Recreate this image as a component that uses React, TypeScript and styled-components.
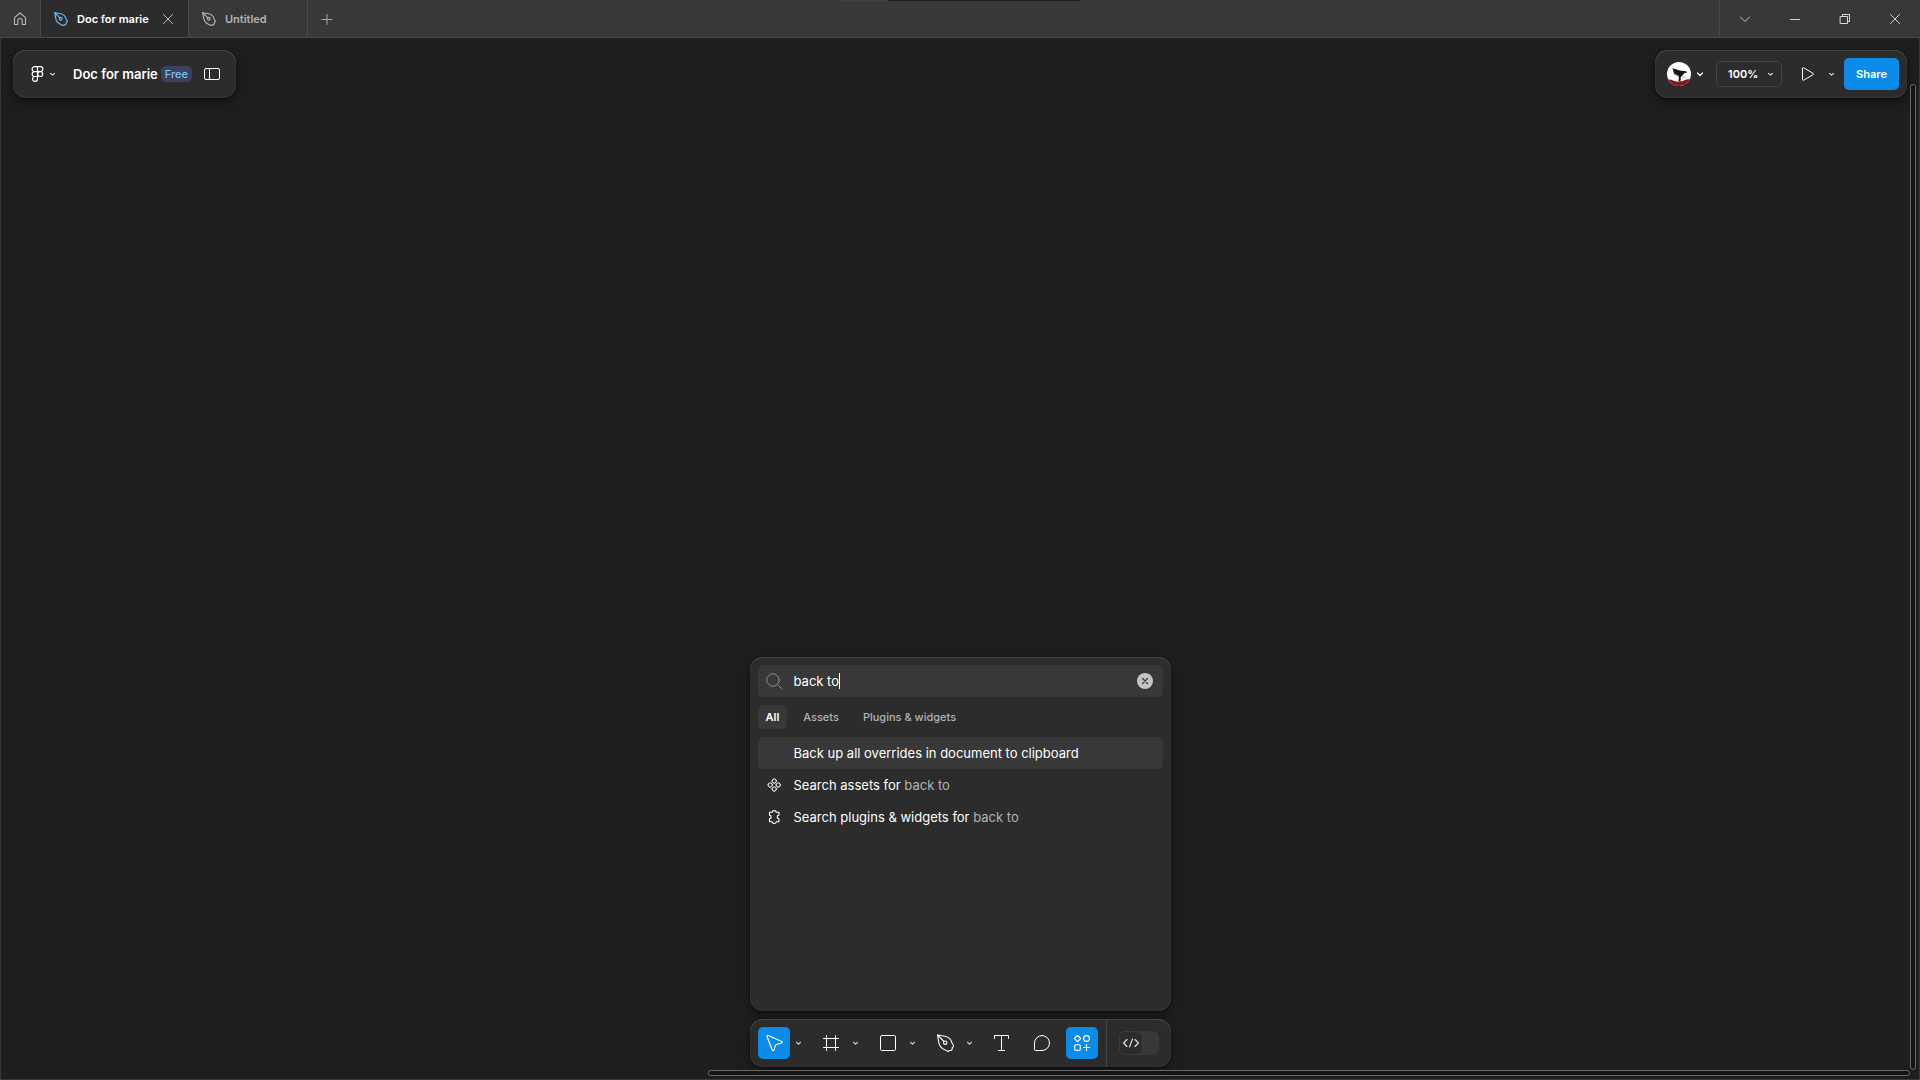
import React from "react";
import styled, { createGlobalStyle } from "styled-components";

const color = {
  bar: "#383838",
  panel: "#2c2c2c",
  canvas: "#1e1e1e",
  line: "#4a4a4a",
  blue: "#0c8ce9",
  soft: "#b3b3b3",
};

const GlobalStyle = createGlobalStyle`
  *, *::before, *::after { box-sizing: border-box; }
  body { margin: 0; background: ${color.canvas}; }
  body, button, input {
    font-family: Inter, "Liberation Sans", sans-serif;
    color: #fff;
  }
  button { border: 0; padding: 0; background: none; cursor: pointer; }
  svg { display: block; flex: none; }
`;

const Window = styled.div`
  min-height: 100vh;
  display: flex;
  flex-direction: column;
`;

/* ---------- title bar ---------- */

const TitleBar = styled.header`
  position: relative;
  height: 38px;
  display: flex;
  background: ${color.bar};
  border-bottom: 1px solid ${color.line};
`;

const TopStrip = styled.div`
  position: absolute;
  top: 0;
  left: 840px;
  width: 241px;
  height: 1px;
  background: linear-gradient(to right, #404040 48px, #1e1e1e 48px);
`;

const HomeButton = styled.button`
  width: 41px;
  display: grid;
  place-items: center;
  border-right: 1px solid ${color.line};
`;

const Tab = styled.div<{ $active?: boolean }>`
  width: ${(p) => (p.$active ? 148 : 119)}px;
  height: 37px;
  padding: 0 12px 0 13px;
  display: flex;
  align-items: center;
  background: ${(p) => (p.$active ? color.panel : "transparent")};
  border-right: 1px solid ${color.line};
`;

const TabLabel = styled.button<{ $active?: boolean }>`
  flex: 1;
  display: flex;
  align-items: center;
  gap: 9px;
  font-size: 11px;
  line-height: 16px;
  font-weight: 600;
  white-space: nowrap;
  color: ${(p) => (p.$active ? "#fff" : color.soft)};
`;

const IconButton = styled.button<{ $width?: number }>`
  width: ${(p) => p.$width ?? 16}px;
  display: grid;
  place-items: center;
`;

const WindowControls = styled.div`
  margin-left: auto;
  display: flex;
  border-left: 1px solid ${color.line};
`;

/* ---------- canvas ---------- */

const Canvas = styled.main`
  position: relative;
  flex: 1;
  display: flex;
  flex-direction: column;
  justify-content: space-between;
  padding: 12px;
  background: ${color.canvas};
  border: 1px solid #383838;
  border-top: 0;
`;

const Scrollbar = styled.div<{ $vertical?: boolean }>`
  position: absolute;
  ${(p) =>
    p.$vertical
      ? "top: 46px; bottom: 9px; right: 3px; width: 6px;"
      : "left: 707px; right: 9px; bottom: 3px; height: 6px;"}
  background: #141414;
  border: 1px solid #686868;
  border-radius: 3px;
`;

const TopRow = styled.div`
  display: flex;
  justify-content: space-between;
`;

const Panel = styled.section`
  background: ${color.panel};
  border-radius: 13px;
  box-shadow:
    inset 0 1px 0 rgba(255, 255, 255, 0.1),
    inset 0 0 1px rgba(255, 255, 255, 0.3),
    0 1px 3px rgba(0, 0, 0, 0.5),
    0 5px 12px rgba(0, 0, 0, 0.3);
`;

const FilePanel = styled(Panel)`
  height: 48px;
  padding: 0 16px 0 18px;
  display: flex;
  align-items: center;
`;

const MenuButton = styled.button`
  margin-right: 11px;
  display: flex;
  align-items: center;
  gap: 1px;
  height: 32px;
  width: 31px;
`;

const FileName = styled.button`
  font-size: 13px;
  line-height: 22px;
  font-weight: 600;
  white-space: nowrap;
`;

const Badge = styled.span`
  height: 16px;
  margin: 0 12px 0 3px;
  padding: 0 4px;
  border-radius: 5px;
  background: #394360;
  color: #7cc4f8;
  font-size: 11px;
  line-height: 16px;
  font-weight: 500;
`;

const SharePanel = styled(Panel)`
  height: 48px;
  padding: 0 8px 0 12px;
  display: flex;
  align-items: center;
`;

const Account = styled.button`
  margin-right: 8px;
  display: flex;
  align-items: center;
  gap: 1px;
`;

const Zoom = styled.button`
  width: 66px;
  height: 26px;
  padding: 0 2px 0 11px;
  margin-right: 12px;
  display: flex;
  align-items: center;
  justify-content: space-between;
  border: 1px solid #444;
  border-radius: 5px;
  font-size: 11px;
  line-height: 16px;
  font-weight: 600;
`;

const ShareButton = styled.button`
  width: 55px;
  height: 32px;
  margin-left: 4px;
  border-radius: 5px;
  background: ${color.blue};
  font-size: 11px;
  line-height: 16px;
  font-weight: 600;
`;

const Dock = styled.div`
  width: 421px;
  align-self: center;
  display: flex;
  flex-direction: column;
  gap: 8px;
`;

/* ---------- quick actions ---------- */

const Palette = styled(Panel)`
  min-height: 354px;
  padding: 8px;
`;

const SearchField = styled.label`
  height: 32px;
  padding: 0 8px;
  display: flex;
  align-items: center;
  background: ${color.bar};
  border-radius: 5px;
`;

const SearchInput = styled.input`
  field-sizing: content;
  margin-left: 12px;
  padding: 0;
  border: 0;
  outline: 0;
  background: none;
  font-size: 13px;
  line-height: 22px;
`;

const Caret = styled.span`
  width: 1px;
  height: 16px;
  background: #fff;
`;

const ClearButton = styled.button`
  margin-left: auto;
  margin-right: 2px;
`;

const Filters = styled.nav`
  display: flex;
  gap: 8px;
  margin: 8px 0;
`;

const Filter = styled.button<{ $active?: boolean }>`
  height: 24px;
  padding: 0 8px;
  border-radius: 5px;
  background: ${(p) => (p.$active ? color.bar : "transparent")};
  color: ${(p) => (p.$active ? "#fff" : color.soft)};
  font-size: 11px;
  line-height: 16px;
  font-weight: ${(p) => (p.$active ? 600 : 500)};
`;

const Results = styled.div`
  display: flex;
  flex-direction: column;
`;

const Result = styled.button<{ $active?: boolean }>`
  height: 32px;
  padding: 0 8px;
  display: flex;
  align-items: center;
  gap: 12px;
  border-radius: 5px;
  background: ${(p) => (p.$active ? color.bar : "transparent")};
  font-size: 13px;
  line-height: 22px;
  white-space: pre;
`;

const ResultIcon = styled.span`
  width: 16px;
`;

const Query = styled.span`
  color: ${color.soft};
`;

/* ---------- toolbar ---------- */

const Toolbar = styled(Panel)`
  height: 48px;
  padding-left: 8px;
  display: flex;
  align-items: center;
  gap: 8px;
`;

const ToolGroup = styled.div`
  display: flex;
  gap: 1px;
`;

const Tool = styled.button<{ $active?: boolean }>`
  width: 32px;
  height: 32px;
  display: grid;
  place-items: center;
  border-radius: 5px;
  background: ${(p) => (p.$active ? color.blue : "transparent")};
`;

const DevSection = styled.div`
  align-self: stretch;
  flex: 1;
  padding-left: 12px;
  display: flex;
  align-items: center;
  border-left: 1px solid #444;
`;

const DevSwitch = styled.button`
  width: 40px;
  height: 24px;
  display: flex;
  align-items: center;
  border-radius: 6px;
  background: ${color.bar};
`;

const DevKnob = styled.span`
  width: 24px;
  height: 24px;
  display: grid;
  place-items: center;
  border: 1px solid #3c3c3c;
  border-radius: 6px;
  background: ${color.panel};
`;

/* ---------- icons ---------- */

type IconProps = {
  size?: number;
  width?: number;
  stroke?: string;
  weight?: number;
  children: React.ReactNode;
};

const Icon = ({ size = 16, width = size, stroke = "#fff", weight = 1, children }: IconProps) => (
  <svg
    width={width}
    height={size}
    viewBox={`0 0 ${width} ${size}`}
    fill="none"
    stroke={stroke}
    strokeWidth={weight}
    strokeLinecap="round"
    strokeLinejoin="round"
    aria-hidden="true"
  >
    {children}
  </svg>
);

const Chevron = () => (
  <Icon stroke="#e0e0e0" weight={1.1}>
    <path d="M5.500 7.300 7.500 9.200 9.500 7.300" />
  </Icon>
);

const HomeIcon = () => (
  <Icon stroke="#b8b8b8" weight={1.1}>
    <path d="M2.500 6.600 8 2l5.500 4.600v6.900h-3.300V9.700a2.200 2.200 0 0 0-4.400 0v3.800H2.500z" />
  </Icon>
);

const PenIcon = ({ size = 18, stroke }: { size?: number; stroke?: string }) => (
  <svg
    width={size}
    height={size}
    viewBox={size < 18 ? "0 0 18 18" : "-0.5 0 18 18"}
    fill="none"
    stroke={stroke ?? "#fff"}
    strokeWidth={size < 18 ? 1.5 : 1.1}
    strokeLinejoin="round"
    strokeLinecap="round"
    aria-hidden="true"
  >
    <path d="M1 1 8.600 2.300C12.500 3.200 14.500 5.700 15.400 8.600c.3 1 .6 1.800 1.500 2.600.5.4.4 1 0 1.400l-1.200 1.100v1.600l-1.200 1.200h-1.600l-.9.700c-.5.3-.9.200-1.400-.2-.7-.7-1.500-1-2.400-1.300C5.400 14.700 3.200 12.300 2.300 8.600z" />
    <path d="M1 1 7.500 7.500" />
    <circle cx="8.700" cy="8.700" r="1.700" />
  </svg>
);

const FigmaIcon = () => (
  <Icon width={13} weight={1.2}>
    <path d="M6.500.6H3.600a2.500 2.500 0 0 0 0 5h2.900zM6.500.6h2.900a2.500 2.500 0 0 1 0 5H6.500zM6.500 5.600H3.600a2.400 2.400 0 0 0 0 4.900h2.900zM3.600 10.500a2.450 2.450 0 1 0 2.900 2.400v-2.400z" />
    <circle cx="9.200" cy="8" r="2.500" />
  </Icon>
);

const Avatar = () => (
  <svg width="24" height="24" viewBox="0 0 24 24" aria-hidden="true">
    <defs>
      <clipPath id="face">
        <circle cx="12" cy="12" r="12" />
      </clipPath>
    </defs>
    <g clipPath="url(#face)">
      <rect width="24" height="24" fill="#fff" />
      <path d="M0 17.800c2-.8 4-.3 6 .6 2 1 4 1 6 1s4-.2 6-1.400c2-1 4-1 6-.4V24H0z" fill="#8c1520" />
      <path d="M5.500 6.200 14 8.800l5.200.4.900 1.400-2.600.3-2 2.600-1.600 1.300-.5 4.700-1.800-.6.300-4.400-5-3.300z" fill="#151515" />
      <path d="m6 12 5.500 2M15 15l3 .5" stroke="#999" strokeWidth=".8" />
    </g>
  </svg>
);

export default function App() {
  return (
    <>
      <GlobalStyle />
      <Window>
        <TitleBar>
          <TopStrip />
          <HomeButton aria-label="Home">
            <HomeIcon />
          </HomeButton>
          <Tab $active>
            <TabLabel $active>
              <PenIcon size={14} stroke="#6cb8f0" />
              Doc for marie
            </TabLabel>
            <IconButton aria-label="Close tab">
              <Icon stroke="#bdbdbd">
                <path d="m3.500 3.500 9 9m0-9-9 9" />
              </Icon>
            </IconButton>
          </Tab>
          <Tab>
            <TabLabel>
              <PenIcon size={14} stroke="#b3b3b3" />
              Untitled
            </TabLabel>
          </Tab>
          <IconButton $width={38} aria-label="New tab">
            <Icon stroke="#a8a8a8">
              <path d="M3 8.500h10M8 3.500v10" />
            </Icon>
          </IconButton>
          <WindowControls>
            <IconButton $width={50} aria-label="All tabs">
              <Icon stroke="#bdbdbd">
                <path d="M3.500 6 8 10.500 12.500 6" />
              </Icon>
            </IconButton>
            <IconButton $width={50} aria-label="Minimize">
              <Icon stroke="#d6d6d6">
                <path d="M3.500 8.500h9" />
              </Icon>
            </IconButton>
            <IconButton $width={50} aria-label="Restore">
              <Icon stroke="#d6d6d6">
                <path d="M3.500 5.500h7v7h-7zM5.500 5.500v-2h7v7h-2" />
              </Icon>
            </IconButton>
            <IconButton $width={50} aria-label="Close window">
              <Icon stroke="#d6d6d6">
                <path d="m3.500 3.500 9 9m0-9-9 9" />
              </Icon>
            </IconButton>
          </WindowControls>
        </TitleBar>

        <Canvas>
          <Scrollbar $vertical />
          <Scrollbar />
          <TopRow>
            <FilePanel>
              <MenuButton aria-label="Main menu">
                <FigmaIcon />
                <Chevron />
              </MenuButton>
              <FileName>Doc for marie</FileName>
              <Badge>Free</Badge>
              <IconButton aria-label="Toggle side panel">
                <Icon>
                  <rect x=".5" y="2.500" width="15" height="11" rx="1.500" />
                  <path d="M5.500 2.500v11" />
                </Icon>
              </IconButton>
            </FilePanel>
            <SharePanel>
              <Account aria-label="Account">
                <Avatar />
                <Icon weight={1.2}>
                  <path d="M5.500 7 8 9.500 10.500 7" />
                </Icon>
              </Account>
              <Zoom>
                100%
                <Chevron />
              </Zoom>
              <IconButton $width={30} aria-label="Present">
                <Icon>
                  <path d="M1.500 2.500v11c0 .8.600 1 1.200.7l9.400-5.500c.6-.4.6-1 0-1.400L2.700 1.800c-.6-.3-1.200-.1-1.200.7z" />
                </Icon>
              </IconButton>
              <IconButton aria-label="Present options">
                <Chevron />
              </IconButton>
              <ShareButton>Share</ShareButton>
            </SharePanel>
          </TopRow>

          <Dock>
            <Palette>
              <SearchField>
                <Icon stroke="#8c8c8c">
                  <circle cx="7" cy="7" r="6.200" />
                  <path d="m11.500 11.500 4 4" />
                </Icon>
                <SearchInput aria-label="Search" defaultValue="back to" />
                <Caret />
                <ClearButton aria-label="Clear search">
                  <Icon stroke="#383838" weight={1.2}>
                    <circle cx="8" cy="8" r="8" fill="#c4c4c4" stroke="none" />
                    <path d="m5.500 5.500 5 5m0-5-5 5" />
                  </Icon>
                </ClearButton>
              </SearchField>
              <Filters>
                <Filter $active>All</Filter>
                <Filter>Assets</Filter>
                <Filter>Plugins &amp; widgets</Filter>
              </Filters>
              <Results>
                <Result $active>
                  <ResultIcon />
                  <span>Back up all overrides in document to clipboard</span>
                </Result>
                <Result>
                  <ResultIcon>
                    <Icon>
                      <rect x="6.300" y="2.100" width="3.800" height="3.800" rx="1" transform="rotate(45 8.200 4)" />
                      <rect x="6.300" y="10.100" width="3.800" height="3.800" rx="1" transform="rotate(45 8.200 12)" />
                      <rect x="2.300" y="6.100" width="3.800" height="3.800" rx="1" transform="rotate(45 4.200 8)" />
                      <rect x="10.300" y="6.100" width="3.800" height="3.800" rx="1" transform="rotate(45 12.200 8)" />
                    </Icon>
                  </ResultIcon>
                  <span>
                    Search assets for <Query>back to</Query>
                  </span>
                </Result>
                <Result>
                  <ResultIcon>
                    <Icon weight={1.1}>
                      <path d="M3.500 3.300h2.700c0-2.300 4-2.300 4 0h2.700v3a1.700 1.700 0 0 0 0 3.400v3h-2.700c0 2.300-4 2.300-4 0H3.500v-3a1.700 1.700 0 0 0 0-3.400z" />
                    </Icon>
                  </ResultIcon>
                  <span>
                    Search plugins &amp; widgets for <Query>back to</Query>
                  </span>
                </Result>
              </Results>
            </Palette>

            <Toolbar>
              <ToolGroup>
                <Tool $active aria-label="Move">
                  <Icon size={18} weight={1.1}>
                    <path d="M2.100 2.700 7.300 16c.3.800 1.300.8 1.600 0l1.500-4.300c.2-.6.6-1 1.200-1.200l5-1.500c.8-.3.9-1.300.1-1.600L3.300 1.500c-.8-.3-1.500.4-1.200 1.200z" />
                  </Icon>
                </Tool>
                <IconButton aria-label="Move tools">
                  <Chevron />
                </IconButton>
              </ToolGroup>
              <ToolGroup>
                <Tool aria-label="Frame">
                  <Icon>
                    <path d="M3.500.5v15M12.500.5v15M.5 3.500h15M.5 12.500h15" />
                  </Icon>
                </Tool>
                <IconButton aria-label="Region tools">
                  <Chevron />
                </IconButton>
              </ToolGroup>
              <ToolGroup>
                <Tool aria-label="Rectangle">
                  <Icon>
                    <rect x=".5" y=".5" width="15" height="15" rx="1" />
                  </Icon>
                </Tool>
                <IconButton aria-label="Shape tools">
                  <Chevron />
                </IconButton>
              </ToolGroup>
              <ToolGroup>
                <Tool aria-label="Pen">
                  <PenIcon />
                </Tool>
                <IconButton aria-label="Drawing tools">
                  <Chevron />
                </IconButton>
              </ToolGroup>
              <Tool aria-label="Text">
                <Icon>
                  <path d="M.5 3.500v-3h14v3M7.500.5v15M4.500 15.500h6" />
                </Icon>
              </Tool>
              <Tool aria-label="Comment">
                <Icon>
                  <path d="M8 .5a7.500 7.500 0 1 1 0 15H1.500a1 1 0 0 1-1-1V8A7.500 7.500 0 0 1 8 .5z" />
                </Icon>
              </Tool>
              <Tool $active aria-label="Actions">
                <Icon weight={1.1}>
                  <path d="m3.500.3 3.200 3.200-3.200 3.200L.3 3.500zM12.500 9.500v6M9.500 12.500h6" />
                  <circle cx="12.500" cy="3.500" r="2.900" />
                  <rect x=".7" y="9.700" width="5.600" height="5.600" rx="1" />
                </Icon>
              </Tool>
              <DevSection>
                <DevSwitch role="switch" aria-checked="false" aria-label="Dev Mode">
                  <DevKnob>
                    <Icon stroke="#e6e6e6" weight={1.1}>
                      <path d="M4 4.500.6 8 4 11.500M12 4.500 15.400 8 12 11.500M9.500 4l-3 8" />
                    </Icon>
                  </DevKnob>
                </DevSwitch>
              </DevSection>
            </Toolbar>
          </Dock>
        </Canvas>
      </Window>
    </>
  );
}
